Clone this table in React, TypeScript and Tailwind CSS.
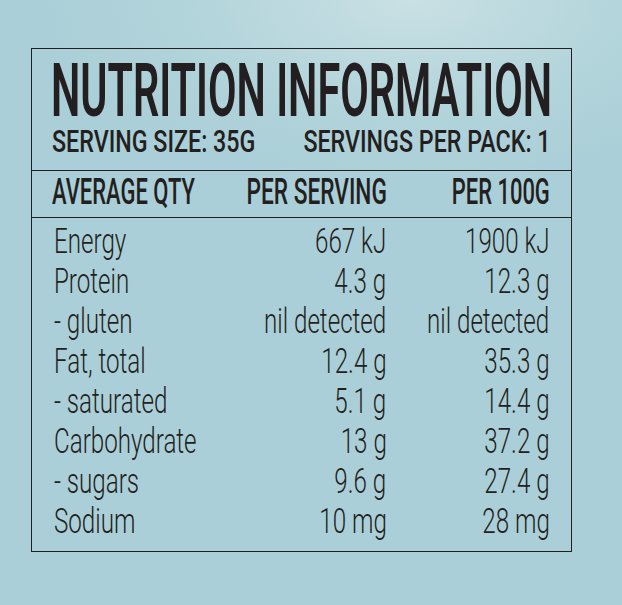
import React from 'react';

const rows: [string, string, string][] = [
  ['Energy', '667 kJ', '1900 kJ'],
  ['Protein', '4.3 g', '12.3 g'],
  ['- gluten', 'nil detected', 'nil detected'],
  ['Fat, total', '12.4 g', '35.3 g'],
  ['- saturated', '5.1 g', '14.4 g'],
  ['Carbohydrate', '13 g', '37.2 g'],
  ['- sugars', '9.6 g', '27.4 g'],
  ['Sodium', '10 mg', '28 mg'],
];

export default function App() {
  return (
    <div
      className="w-[622px] h-[605px] overflow-hidden pt-[48px] pl-[31px] text-[#231f20] bg-[radial-gradient(ellipse_60%_30%_at_66%_0%,#c9e0e4_0%,#b2d4db_60%,#abcfd8_100%)]"
      style={{ fontFamily: 'Roboto, "Liberation Sans", sans-serif' }}
    >
      <div className="w-[541px] h-[504px] border-[1.5px] border-[#231f20] flex flex-col">
        {/* Title block */}
        <div className="px-[20px] pt-[12px] pb-[10px] border-b-[1.5px] border-[#231f20]">
          <div className="h-[60px] leading-[60px] text-[74px] font-semibold flex justify-center whitespace-nowrap">
            <span className="shrink-0 inline-block origin-center scale-x-[0.56]">NUTRITION INFORMATION</span>
          </div>
          <div className="mt-[3px] h-[36px] leading-[36px] text-[31px] font-medium flex whitespace-nowrap">
            <div className="flex-1 min-w-0 flex">
              <span className="shrink-0 inline-block origin-left scale-x-[0.75]">SERVING SIZE: 35G</span>
            </div>
            <div className="flex-1 min-w-0 flex justify-end">
              <span className="shrink-0 inline-block origin-right scale-x-[0.75]">SERVINGS PER PACK: 1</span>
            </div>
          </div>
        </div>

        {/* Column headings */}
        <div className="flex pl-[20px] pr-[21px] pb-[3px] h-[46.5px] leading-[42px] text-[36px] font-medium whitespace-nowrap border-b-[1.5px] border-[#231f20]">
          <div className="flex-1 min-w-0 flex">
            <span className="shrink-0 inline-block origin-left scale-x-[0.61]">AVERAGE QTY</span>
          </div>
          <div className="w-[160px] min-w-0 flex justify-end">
            <span className="shrink-0 inline-block origin-right scale-x-[0.63]">PER SERVING</span>
          </div>
          <div className="w-[163px] min-w-0 flex justify-end">
            <span className="shrink-0 inline-block origin-right scale-x-[0.61]">PER 100G</span>
          </div>
        </div>

        {/* Nutrient rows */}
        <div className="pl-[22px] pr-[21.5px] pt-[4.5px] text-[35px] leading-[40px] font-light whitespace-nowrap">
          {rows.map(([label, serving, per100]) => (
            <div key={label} className="flex h-[40px]">
              <div className="flex-1 min-w-0 flex">
                <span className="shrink-0 inline-block origin-left scale-x-[0.69]">{label}</span>
              </div>
              <div className="w-[160px] min-w-0 flex justify-end">
                <span className="shrink-0 inline-block origin-right scale-x-[0.69]">{serving}</span>
              </div>
              <div className="w-[163px] min-w-0 flex justify-end">
                <span className="shrink-0 inline-block origin-right scale-x-[0.69]">{per100}</span>
              </div>
            </div>
          ))}
        </div>
      </div>
    </div>
  );
}
